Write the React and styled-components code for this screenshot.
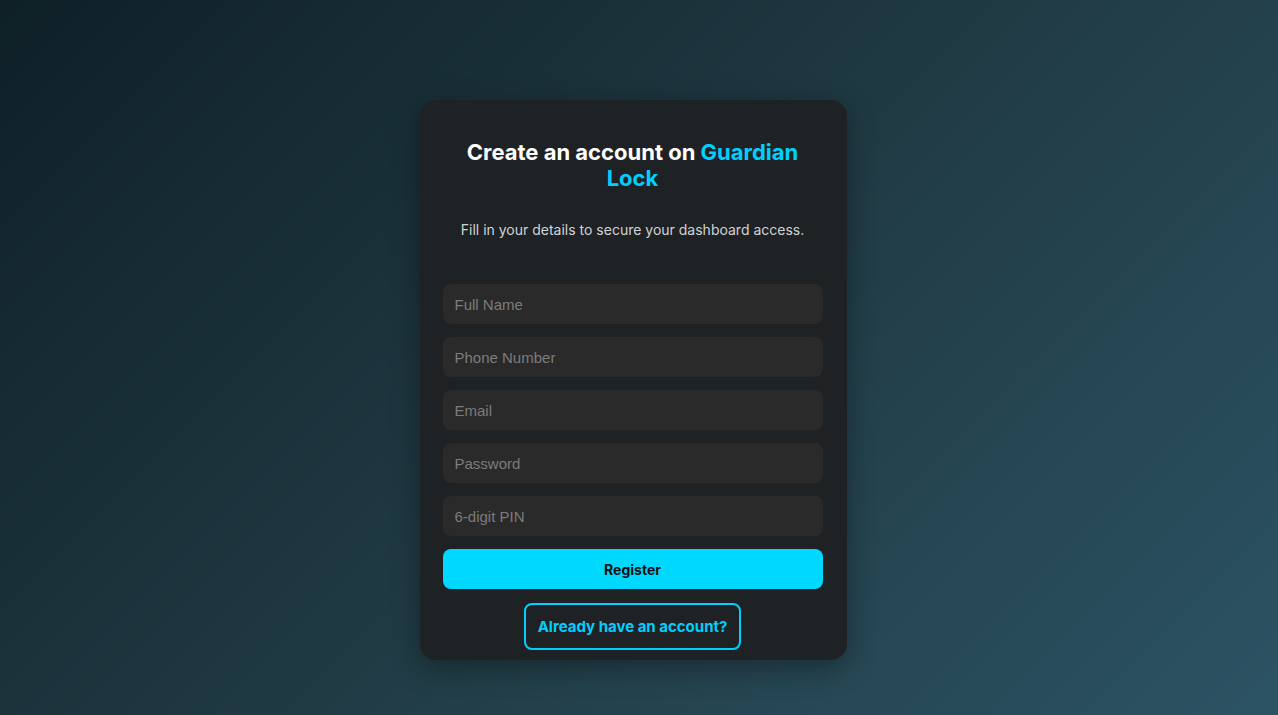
import React from 'react'
import styled, { createGlobalStyle } from 'styled-components'

const GlobalStyle = createGlobalStyle`
  html, body {
    margin: 0;
    padding: 0;
  }
  body {
    font-family: Inter, 'Liberation Sans', sans-serif;
    background: linear-gradient(135deg, #0f2027, #203a43, #2c5364);
    background-attachment: fixed;
  }
  * {
    box-sizing: border-box;
  }
`

// right padding leaves room where the scrollbar sits in the reference
const Page = styled.div`
  min-height: 100vh;
  display: flex;
  justify-content: center;
  align-items: flex-start;
  padding: 100px 12px 0 0;
`

const Card = styled.div`
  width: 427px;
  background: #1f2224;
  border-radius: 16px;
  padding: 39px 24px 10px 23px;
  box-shadow: 0 8px 28px rgba(0, 0, 0, 0.35);
  text-align: center;
`

const Title = styled.h2`
  margin: 0 20px;
  font-size: 22px;
  line-height: 26px;
  font-weight: 700;
  color: #ffffff;
`

const Brand = styled.span`
  color: #00cfff;
`

const Subtitle = styled.p`
  margin: 30px 0 45px;
  font-size: 14px;
  line-height: 18px;
  color: #cfd3d6;
`

const Form = styled.form`
  display: flex;
  flex-direction: column;
  gap: 13px;
`

const Input = styled.input`
  height: 40px;
  width: 100%;
  border: none;
  outline: none;
  border-radius: 8px;
  background: #2a2a2a;
  color: #e6e6e6;
  padding: 0 12px;
  font-family: 'Liberation Sans', Arial, sans-serif;
  font-size: 15px;

  &::placeholder {
    color: #7c7c7c;
  }
`

const Submit = styled.button`
  height: 40px;
  border: none;
  border-radius: 8px;
  background: #00d8ff;
  color: #111;
  font-family: Inter, 'Liberation Sans', sans-serif;
  font-size: 14px;
  font-weight: 700;
  cursor: pointer;
`

const LoginLink = styled.button`
  margin: 14px auto 0;
  display: block;
  background: transparent;
  border: 2px solid #00cfff;
  border-radius: 8px;
  padding: 13px 12px 12px;
  color: #00cfff;
  font-family: Inter, 'Liberation Sans', sans-serif;
  font-size: 15px;
  line-height: 18px;
  font-weight: 700;
  cursor: pointer;
`

const App = () => (
  <>
    <GlobalStyle />
    <Page>
      <Card>
        <Title>
          Create an account on <Brand>Guardian Lock</Brand>
        </Title>
        <Subtitle>Fill in your details to secure your dashboard access.</Subtitle>
        <Form onSubmit={(e) => e.preventDefault()}>
          <Input type="text" placeholder="Full Name" />
          <Input type="tel" placeholder="Phone Number" />
          <Input type="email" placeholder="Email" />
          <Input type="password" placeholder="Password" />
          <Input type="password" placeholder="6-digit PIN" />
          <Submit type="submit">Register</Submit>
        </Form>
        <LoginLink type="button">Already have an account?</LoginLink>
      </Card>
    </Page>
  </>
)

export default App
